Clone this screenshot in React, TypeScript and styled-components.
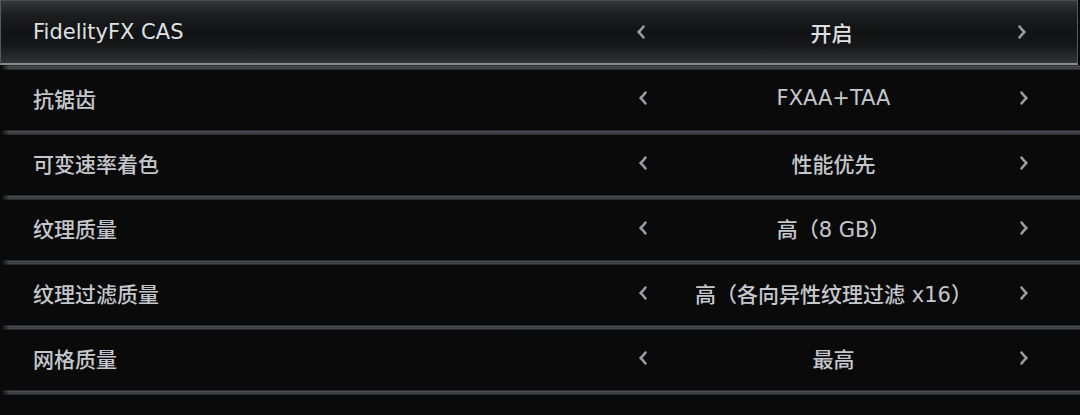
import { FC } from 'react';
import styled, { createGlobalStyle } from 'styled-components';

const GlobalStyle = createGlobalStyle`
    html, body {
        margin: 0;
        padding: 0;
        background: #0a0a0a;
    }
    body {
        font-family: 'DejaVu Sans', 'Noto Sans CJK SC', sans-serif;
        -webkit-font-smoothing: antialiased;
    }
`;

const Page = styled.div`
    width: 1080px;
    height: 415px;
    overflow: hidden;
    background: #0a0a0a;
    display: flex;
    flex-direction: column;
`;

const Row = styled.div<{ $active?: boolean }>`
    display: flex;
    align-items: center;
    box-sizing: border-box;
    height: ${(p) => (p.$active ? '65px' : '60px')};
    padding: ${(p) => (p.$active ? '0 41px 1px 32px' : '0 42px 4px 33px')};
    font-size: 21px;
    font-weight: 500;
    color: ${(p) => (p.$active ? '#dfe1e3' : '#c4c8cc')};
    ${(p) =>
        p.$active &&
        `
        width: 1078px;
        border: 1px solid #55585c;
        border-bottom: 2px solid #858a8f;
        border-top-color: #4a4d51;
        background: linear-gradient(
            to bottom,
            #34363a 0%,
            #1c1d1f 22%,
            #121314 50%,
            #161718 72%,
            #313337 100%
        );
    `}
`;

const Label = styled.div`
    flex: 1;
    white-space: nowrap;
`;

const Control = styled.div`
    width: 409px;
    display: grid;
    grid-template-columns: 28px 1fr 28px;
    align-items: center;
`;

const Value = styled.span`
    text-align: center;
    white-space: nowrap;
`;

const Arrow = styled.svg`
    display: block;
    justify-self: center;
    width: 10px;
    height: 14px;
`;

const Divider = styled.div`
    height: 5px;
    flex-shrink: 0;
    margin-left: 1px;
    background: linear-gradient(
        to bottom,
        #1b1c1e 0%,
        #4a4d51 30%,
        #35383b 55%,
        #464a4e 75%,
        #161718 100%
    );
    mask-image: linear-gradient(to right, transparent 0, #000 8px);
`;

const Chevron: FC<{ dir: 'left' | 'right' }> = ({ dir }) => (
    <Arrow viewBox="0 0 10 14">
        <path
            d={dir === 'left' ? 'M7.5 1.5 Q5 5 2.5 7 Q5 9 7.5 12.5' : 'M2.5 1.5 Q5 5 7.5 7 Q5 9 2.5 12.5'}
            fill="none"
            stroke="#9a9da1"
            strokeWidth="2.5"
            strokeLinecap="round"
            strokeLinejoin="round"
        />
    </Arrow>
);

const settings = [
    { name: '抗锯齿', value: 'FXAA+TAA' },
    { name: '可变速率着色', value: '性能优先' },
    { name: '纹理质量', value: '高（8 GB）' },
    { name: '纹理过滤质量', value: '高（各向异性纹理过滤 x16）' },
    { name: '网格质量', value: '最高' },
];

const Option: FC<{ name: string; value: string; active?: boolean }> = ({ name, value, active }) => (
    <Row $active={active}>
        <Label>{name}</Label>
        <Control>
            <Chevron dir="left" />
            <Value>{value}</Value>
            <Chevron dir="right" />
        </Control>
    </Row>
);

const App: FC = () => (
    <Page>
        <GlobalStyle />
        <Option name="FidelityFX CAS" value="开启" active />
        {settings.map((s) => (
            <div key={s.name}>
                <Divider />
                <Option name={s.name} value={s.value} />
            </div>
        ))}
        <Divider />
    </Page>
);

export default App;
